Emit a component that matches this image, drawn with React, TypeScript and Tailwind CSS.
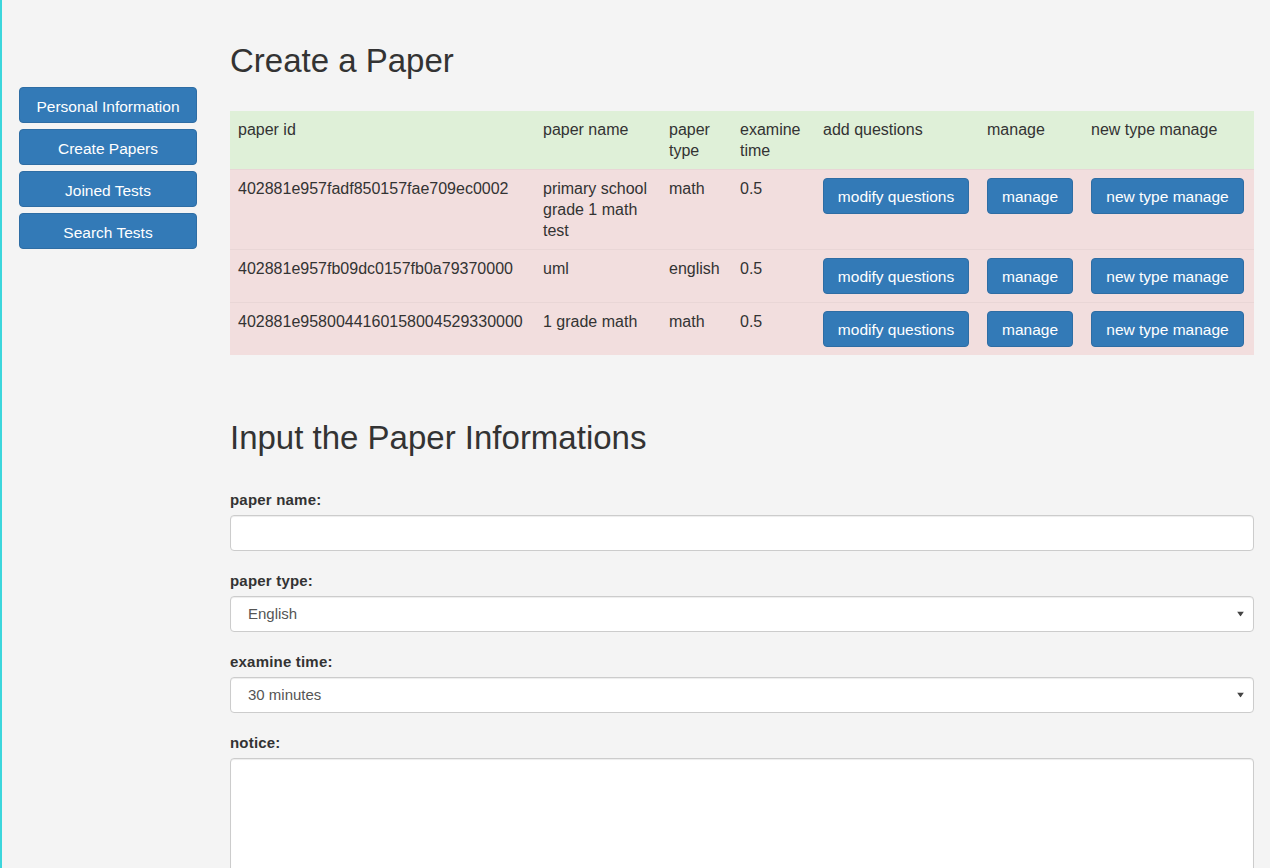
import React from "react";

const font = { fontFamily: '"Liberation Sans", Arial, Helvetica, sans-serif' };

const navItems = ["Personal Information", "Create Papers", "Joined Tests", "Search Tests"];

interface Paper {
  id: string;
  name: string;
  type: string;
  time: string;
}

const papers: Paper[] = [
  { id: "402881e957fadf850157fae709ec0002", name: "primary school grade 1 math test", type: "math", time: "0.5" },
  { id: "402881e957fb09dc0157fb0a79370000", name: "uml", type: "english", time: "0.5" },
  { id: "402881e9580044160158004529330000", name: "1 grade math", type: "math", time: "0.5" },
];

function Btn({ children, w, extra = "" }: { children: React.ReactNode; w: string; extra?: string }) {
  return (
    <button
      className={`${w} ${extra} h-[36px] flex items-center justify-center rounded-[4px] border border-[#2e6da4] bg-[#337ab7] text-[15.5px] text-white`}
    >
      {children}
    </button>
  );
}

function Caret() {
  return (
    <svg
      className="absolute right-[10px] top-1/2 -translate-y-1/2 pointer-events-none"
      width="7"
      height="5"
      viewBox="0 0 7 5"
    >
      <path d="M0 0h7L3.5 5z" fill="#444" />
    </svg>
  );
}

function Label({ children }: { children: React.ReactNode }) {
  return (
    <div className="text-[15px] font-bold leading-[21px] tracking-[0.2px] text-[#333] mb-[5px]">{children}</div>
  );
}

const fieldCls =
  "h-[36px] w-full rounded-[4px] border border-[#ccc] bg-white text-[15px] shadow-[inset_0_1px_1px_rgba(0,0,0,0.075)]";

export default function App() {
  return (
    <div style={font} className="min-h-screen bg-[#f4f4f4] border-l-2 border-[#3cd6dc] flex text-[#333]">
      {/* sidebar */}
      <div className="w-[228px] shrink-0 pl-[17px] pt-[87px] flex flex-col gap-[6px]">
        {navItems.map((n) => (
          <Btn key={n} w="w-[178px]" extra="pt-[3px]">
            {n}
          </Btn>
        ))}
      </div>

      {/* main */}
      <div className="w-[1024px] shrink-0">
        <h1 className="text-[33px] leading-[40px] mt-[41px] mb-[30px] font-normal text-[#333]">Create a Paper</h1>

        <table className="w-full table-fixed border-collapse text-[16px] leading-[21px]">
          <colgroup>
            <col className="w-[305px]" />
            <col className="w-[126px]" />
            <col className="w-[71px]" />
            <col className="w-[83px]" />
            <col className="w-[164px]" />
            <col className="w-[104px]" />
            <col className="w-[171px]" />
          </colgroup>
          <thead>
            <tr className="bg-[#dff0d8] h-[58px]">
              {["paper id", "paper name", "paper type", "examine time", "add questions", "manage", "new type manage"].map(
                (h) => (
                  <th key={h} className="p-[8px] text-left align-top font-normal">
                    {h}
                  </th>
                )
              )}
            </tr>
          </thead>
          <tbody>
            {papers.map((p) => (
              <tr key={p.id} className="bg-[#f2dede] border-t border-[#e9d6d6]">
                <td className="p-[8px] align-top whitespace-nowrap">{p.id}</td>
                <td className="p-[8px] align-top">{p.name}</td>
                <td className="p-[8px] align-top">{p.type}</td>
                <td className="p-[8px] align-top">{p.time}</td>
                <td className="p-[8px] align-top">
                  <Btn w="w-[146px]">modify questions</Btn>
                </td>
                <td className="p-[8px] align-top">
                  <Btn w="w-[86px]">manage</Btn>
                </td>
                <td className="p-[8px] align-top">
                  <Btn w="w-[153px]">new type manage</Btn>
                </td>
              </tr>
            ))}
          </tbody>
        </table>

        <h1 className="text-[33px] leading-[40px] mt-[63px] mb-[31px] font-normal text-[#333]">
          Input the Paper Informations
        </h1>

        <form className="flex flex-col">
          <Label>paper name:</Label>
          <input className={`${fieldCls} px-[12px] mb-[19px]`} type="text" />

          <Label>paper type:</Label>
          <div className="relative mb-[19px]">
            <select className={`${fieldCls} appearance-none pl-[17px] text-[#555]`} defaultValue="English">
              <option>English</option>
              <option>Math</option>
            </select>
            <Caret />
          </div>

          <Label>examine time:</Label>
          <div className="relative mb-[19px]">
            <select className={`${fieldCls} appearance-none pl-[17px] text-[#555]`} defaultValue="30 minutes">
              <option>30 minutes</option>
              <option>60 minutes</option>
            </select>
            <Caret />
          </div>

          <Label>notice:</Label>
          <textarea className="h-[160px] w-full rounded-[4px] border border-[#ccc] bg-white px-[12px] shadow-[inset_0_1px_1px_rgba(0,0,0,0.075)] resize-none" />
        </form>
      </div>
    </div>
  );
}
